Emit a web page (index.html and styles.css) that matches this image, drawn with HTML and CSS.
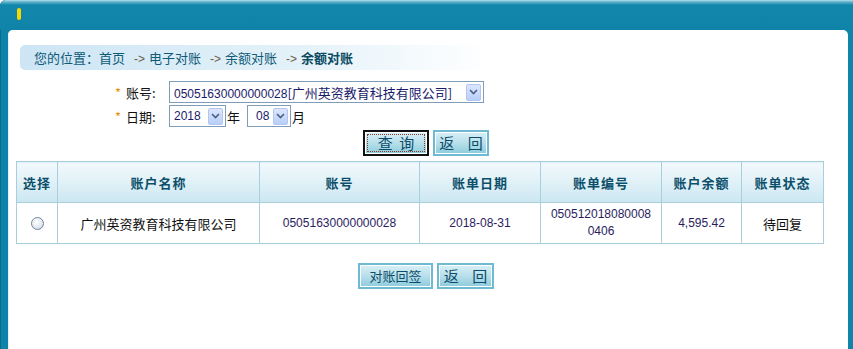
FILE: index.html
```html
<!DOCTYPE html>
<html lang="zh-CN">

<head>
    <meta charset="UTF-8">
    <title>余额对账</title>
    <link rel="stylesheet" href="styles.css">
</head>

<body>
<div class="frame">
    <div class="topbar"><span class="mark"></span></div>
    <div class="content">
        <div class="crumb">
            您的位置：<a>首页</a><span class="arrow">-&gt;</span><a>电子对账</a><span class="arrow">-&gt;</span><a>余额对账</a><span class="arrow">-&gt;</span><b>余额对账</b>
        </div>

        <div class="form">
            <div class="row">
                <span class="star">*</span>
                <span class="label">账号:</span>
                <span class="select wide"><span class="val"><span class="num">05051630000000028</span>[广州英资教育科技有限公司]</span><span class="drop"><svg width="9" height="6" viewBox="0 0 9 6"><path d="M1 1l3.5 3.5L8 1" fill="none" stroke="#4a5f86" stroke-width="1.6"/></svg></span></span>
            </div>
            <div class="row">
                <span class="star">*</span>
                <span class="label">日期:</span>
                <span class="select year"><span class="val num">2018</span><span class="drop"><svg width="9" height="6" viewBox="0 0 9 6"><path d="M1 1l3.5 3.5L8 1" fill="none" stroke="#4a5f86" stroke-width="1.6"/></svg></span></span>
                <span class="unit">年</span>
                <span class="select month"><span class="val num">08</span><span class="drop"><svg width="9" height="6" viewBox="0 0 9 6"><path d="M1 1l3.5 3.5L8 1" fill="none" stroke="#4a5f86" stroke-width="1.6"/></svg></span></span>
                <span class="unit">月</span>
            </div>
        </div>

        <div class="btns top">
            <button class="btn focus"><span>查&nbsp;&nbsp;询</span></button>
            <button class="btn back">返&nbsp;&nbsp;&nbsp;&nbsp;回</button>
        </div>

        <table class="list">
            <colgroup>
                <col style="width:41px">
                <col style="width:202px">
                <col style="width:160px">
                <col style="width:121px">
                <col style="width:121px">
                <col style="width:80px">
                <col style="width:82px">
            </colgroup>
            <tr>
                <th>选择</th>
                <th>账户名称</th>
                <th>账号</th>
                <th>账单日期</th>
                <th>账单编号</th>
                <th>账户余额</th>
                <th>账单状态</th>
            </tr>
            <tr>
                <td><span class="radio"></span></td>
                <td>广州英资教育科技有限公司</td>
                <td class="num">05051630000000028</td>
                <td class="num">2018-08-31</td>
                <td class="num">050512018080008<br>0406</td>
                <td class="num">4,595.42</td>
                <td>待回复</td>
            </tr>
        </table>

        <div class="btns bottom">
            <button class="btn sign">对账回签</button>
            <button class="btn back">返&nbsp;&nbsp;&nbsp;&nbsp;回</button>
        </div>
    </div>
</div>
</body>
</html>
```

FILE: styles.css
```css
* {
    box-sizing: border-box;
}

html, body {
    margin: 0;
    height: 100%;
    background: #fff;
    font-family: "Noto Sans CJK SC", sans-serif;
    font-size: 13px;
}

.num {
    font-family: "Liberation Sans", sans-serif;
    font-size: 12px;
}

.frame {
    height: 349px;
    background: #1084a8;
    border-radius: 6px 0 0 0;
    padding: 0 5px 0 8px;
    box-shadow: inset 1px 0 0 #0a6b8c;
    display: flex;
    flex-direction: column;
}

.topbar {
    height: 30px;
    margin: 0 -5px 0 -8px;
    padding: 8px 0 0 17px;
    border-radius: 6px 0 0 0;
    background: linear-gradient(#b6dfec 0, #5fb1cb 2px, #1187ab 5px, #1084a8 100%);
}

.mark {
    display: block;
    width: 4px;
    height: 12px;
    border-radius: 2px;
    background: #f7d900;
}

.content {
    flex: 1;
    background: #fff;
    border-radius: 5px 5px 0 0;
    padding-top: 15px;
    box-shadow: inset 1px 0 0 #e4f1f6;
}

.crumb {
    margin-left: 12px;
    width: 470px;
    height: 25px;
    line-height: 25px;
    padding-left: 14px;
    border-radius: 5px;
    background: linear-gradient(to right, #cde5f5, #e4f2f9 60%, #fff);
    color: #0e5a77;
}

.crumb a {
    color: #0e5a77;
}

.crumb .arrow {
    margin: 0 4px 0 9px;
    color: #6b5b4b;
    font-family: "Liberation Sans", sans-serif;
    font-size: 12px;
}

.crumb b {
    color: #0b4a63;
}

.form {
    margin-top: 11px;
    padding-left: 107px;
}

.row {
    display: flex;
    align-items: center;
    height: 22px;
    margin-bottom: 2px;
    color: #111;
}

.star {
    color: #f08a00;
    width: 10px;
}

.label {
    width: 44px;
    padding-left: 1px;
}

.select {
    display: flex;
    align-items: center;
    height: 22px;
    border: 1px solid #7f9db9;
    background: #fff;
    padding: 0 2px 0 4px;
    color: #1a1a6a;
}

.select .val {
    flex: 1;
    white-space: nowrap;
}

.select.wide {
    width: 315px;
}

.select.year {
    width: 57px;
}

.select.month {
    width: 44px;
    margin-left: 7px;
    padding-left: 8px;
}

.drop {
    flex: none;
    width: 15px;
    height: 17px;
    border: 1px solid #b3c6ef;
    border-radius: 2px;
    background: linear-gradient(#dbe6fd, #b9cff8);
    display: flex;
    align-items: center;
    justify-content: center;
}

.unit {
    margin-left: 1px;
}

.btns {
    display: flex;
    justify-content: center;
    gap: 4px;
    padding-right: 4px;
}

.btns.top {
    margin-top: 3px;
}

.btns.bottom {
    margin-top: 19px;
}

.btn {
    height: 26px;
    padding: 0;
    border: 2px solid #6fbad3;
    box-shadow: inset 0 0 0 1px #fff;
    background: linear-gradient(#d9eff6, #b7dfea 50%, #8ccbdc);
    color: #0c4c6a;
    font-family: "Noto Sans CJK SC", sans-serif;
    font-size: 15px;
    line-height: 20px;
}

.btn.focus {
    width: 66px;
    border-color: #111;
    padding: 2px;
}

.btn.focus span {
    display: block;
    height: 100%;
    border: 1px dotted #8a3a2a;
    line-height: 16px;
}

.btn.back {
    width: 56px;
}

.btn.sign {
    width: 75px;
    font-size: 13px;
}

.btns.bottom .back {
    width: 57px;
}

.list {
    margin: 5px 0 0 8px;
    border-collapse: collapse;
    table-layout: fixed;
    width: 807px;
}

.list th, .list td {
    border: 1px solid #a9cfdc;
    text-align: center;
}

.list th {
    height: 41px;
    font-size: 13px;
    letter-spacing: 1px;
    color: #0c4f6b;
    background: linear-gradient(#f2f9fc, #e0f1f7 50%, #cbe7f1);
}

.list td {
    height: 41px;
    color: #111;
    line-height: 17px;
}

.list td.num {
    color: #2a1d5e;
}

.radio {
    display: inline-block;
    width: 13px;
    height: 13px;
    margin-top: 4px;
    border-radius: 50%;
    border: 1px solid #6f86a6;
    background: radial-gradient(circle at 40% 35%, #fff, #e6e9ee 55%, #c6ccd6);
}
```
